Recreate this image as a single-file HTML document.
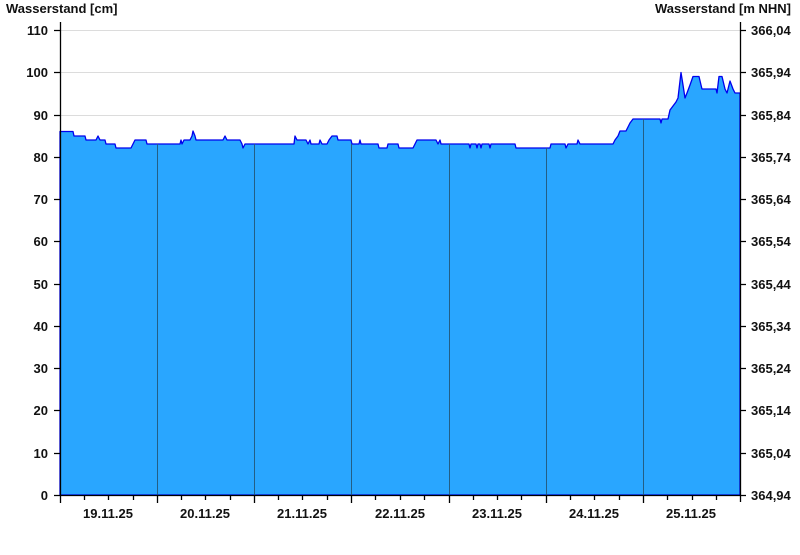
<!DOCTYPE html>
<html><head><meta charset="utf-8"><style>
body{margin:0;background:#fff;width:800px;height:550px;overflow:hidden}
text{font-family:"Liberation Sans",Arial,sans-serif;font-weight:bold;font-size:13px;fill:#111}
</style></head><body>
<svg width="800" height="550" viewBox="0 0 800 550" xmlns="http://www.w3.org/2000/svg">
<text x="6" y="13">Wasserstand [cm]</text>
<text x="791" y="13" text-anchor="end">Wasserstand [m NHN]</text>
<g stroke="#dcdcdc" stroke-width="1">
<line x1="60" x2="740" y1="30.5" y2="30.5"/><line x1="60" x2="740" y1="72.5" y2="72.5"/><line x1="60" x2="740" y1="115.5" y2="115.5"/>
</g>
<path fill="#29a6ff" stroke="#0000ee" stroke-width="1.3" stroke-linejoin="round" d="M60,131.5 L73,131.5 L74,136 L85,136 L86,140 L96,140 L98,136 L100,140 L105,140 L106,144 L115,144 L116,148 L131,148 L133,144 L135,140 L146,140 L147,144 L180,144 L181,140 L182,144 L184,140 L186,140 L190,140 L192,136 L193,131 L195,136 L196,140 L223,140 L225,136 L227,140 L240,140 L242,144 L243,148 L245,144 L294,144 L295,136 L297,140 L300,140 L301,140 L306,140 L308,144 L310,140 L311,144 L319,144 L320,140 L322,144 L327,144 L329,140 L332,136 L337,136 L338,140 L351,140 L352,144 L359,144 L360,140 L361,144 L378,144 L379,148 L387,148 L388,144 L398,144 L399,148 L413,148 L415,144 L417,140 L436,140 L438,144 L440,140 L441,144 L469,144 L470,148 L471,144 L476,144 L477,148 L478,144 L480,144 L481,148 L482,144 L489,144 L490,148 L491,144 L515,144 L516,148 L550,148 L551,144 L565,144 L566,148 L568,144 L577,144 L578,140 L580,144 L613,144 L615,140 L618,136 L620,131 L626,131 L628,127 L630,123 L633,119 L660,119 L661,123 L662,119 L668,119 L670,110 L673,106 L676,102 L678,98 L680,81 L681,72.5 L683,85 L685,98 L687,93 L690,85 L693,76.5 L699,76.5 L701,85 L702,89 L716,89 L717,93 L719,76.5 L722,76.5 L725,89 L727,93 L730,81 L733,89 L735,93 L740,93 L740,495 L60,495 Z"/>
<g stroke="#235e85" stroke-width="1">
<line x1="157.5" x2="157.5" y1="144" y2="495"/><line x1="254.5" x2="254.5" y1="144" y2="495"/><line x1="351.5" x2="351.5" y1="144" y2="495"/><line x1="449.5" x2="449.5" y1="144" y2="495"/><line x1="546.5" x2="546.5" y1="148" y2="495"/><line x1="643.5" x2="643.5" y1="119" y2="495"/>
</g>
<g stroke="#000" stroke-width="1.3" fill="none">
<line x1="60.5" x2="60.5" y1="22" y2="495"/>
<line x1="740.5" x2="740.5" y1="22" y2="502"/>
<line x1="60" x2="741" y1="495.5" y2="495.5"/>
<path d="M54,30.5h6M54,72.5h6M54,115.5h6M54,157.5h6M54,199.5h6M54,241.5h6M54,284.5h6M54,326.5h6M54,368.5h6M54,410.5h6M54,453.5h6M54,495.5h6"/>
<path d="M740,30.5h6M740,72.5h6M740,115.5h6M740,157.5h6M740,199.5h6M740,241.5h6M740,284.5h6M740,326.5h6M740,368.5h6M740,410.5h6M740,453.5h6M740,495.5h6"/>
<path d="M60.5,495v8M157.5,495v8M254.5,495v8M351.5,495v8M449.5,495v8M546.5,495v8M643.5,495v8M84.5,495v5M108.5,495v5M133.5,495v5M181.5,495v5M205.5,495v5M230.5,495v5M278.5,495v5M302.5,495v5M327.5,495v5M375.5,495v5M400.5,495v5M424.5,495v5M473.5,495v5M497.5,495v5M521.5,495v5M570.5,495v5M594.5,495v5M619.5,495v5M667.5,495v5M692.5,495v5M716.5,495v5"/>
</g>
<g text-anchor="end">
<text x="48" y="35">110</text><text x="48" y="77">100</text><text x="48" y="120">90</text><text x="48" y="162">80</text><text x="48" y="204">70</text><text x="48" y="246">60</text><text x="48" y="289">50</text><text x="48" y="331">40</text><text x="48" y="373">30</text><text x="48" y="415">20</text><text x="48" y="458">10</text><text x="48" y="500">0</text>
</g>
<g>
<text x="751" y="35">366,04</text><text x="751" y="77">365,94</text><text x="751" y="120">365,84</text><text x="751" y="162">365,74</text><text x="751" y="204">365,64</text><text x="751" y="246">365,54</text><text x="751" y="289">365,44</text><text x="751" y="331">365,34</text><text x="751" y="373">365,24</text><text x="751" y="415">365,14</text><text x="751" y="458">365,04</text><text x="751" y="500">364,94</text>
</g>
<g text-anchor="middle">
<text x="108" y="518">19.11.25</text><text x="205" y="518">20.11.25</text><text x="302" y="518">21.11.25</text><text x="400" y="518">22.11.25</text><text x="497" y="518">23.11.25</text><text x="594" y="518">24.11.25</text><text x="691" y="518">25.11.25</text>
</g>
</svg>
</body></html>
